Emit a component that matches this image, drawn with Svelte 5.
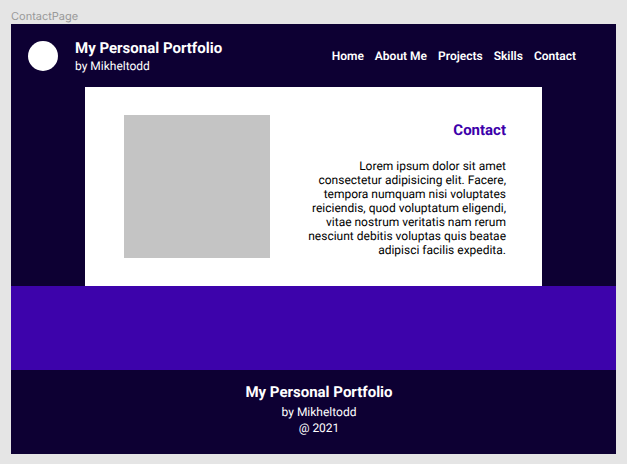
<script>
  const links = ['Home', 'About Me', 'Projects', 'Skills', 'Contact'];
</script>

<div class="board">
  <p class="label">ContactPage</p>
  <div class="page">
    <header>
      <span class="avatar"></span>
      <div class="brand">
        <h1>My Personal Portfolio</h1>
        <p>by Mikheltodd</p>
      </div>
      <nav>
        {#each links as link}
          <a href="#{link.toLowerCase().replace(' ', '-')}">{link}</a>
        {/each}
      </nav>
    </header>

    <main>
      <div class="photo"></div>
      <section>
        <h2>Contact</h2>
        <p>
          Lorem ipsum dolor sit amet consectetur adipisicing elit. Facere, tempora numquam nisi
          voluptates reiciendis, quod voluptatum eligendi, vitae nostrum veritatis nam rerum
          nesciunt debitis voluptas quis beatae adipisci facilis expedita.
        </p>
      </section>
    </main>

    <div class="band"></div>

    <footer>
      <h2>My Personal Portfolio</h2>
      <p>by Mikheltodd</p>
      <p>@ 2021</p>
    </footer>
  </div>
</div>

<style>
  :global(body) {
    background: #e5e5e5;
  }

  h1,
  h2,
  p {
    margin: 0;
  }

  h1,
  h2 {
    font-size: 15px;
    line-height: 18px;
    font-weight: 700;
  }

  .board {
    padding: 8px 11px 10px;
    font-family: Roboto, 'Liberation Sans', sans-serif;
    font-size: 12px;
    line-height: 16px;
    text-rendering: geometricPrecision;
  }

  .label {
    font-family: Inter, sans-serif;
    font-size: 11px;
    color: #999;
  }

  .page {
    background: #0d0033;
    color: #fff;
  }

  header {
    display: flex;
    align-items: center;
    height: 63px;
    box-sizing: border-box;
    padding: 0 40px 0 17px;
  }

  .avatar {
    width: 30px;
    height: 30px;
    border-radius: 50%;
    background: #fff;
  }

  .brand {
    margin-left: 17px;
    padding-top: 2px;
  }

  .brand p {
    line-height: 18px;
  }

  nav {
    display: flex;
    gap: 11px;
    margin-left: auto;
  }

  a {
    color: inherit;
    font-weight: 600;
    text-decoration: none;
  }

  main {
    display: flex;
    justify-content: space-between;
    margin: 0 74px;
    padding: 28px 36px 28px 39px;
    background: #fff;
  }

  .photo {
    width: 146px;
    height: 143px;
    background: #c4c4c4;
  }

  section {
    width: 200px;
    padding-top: 6px;
    text-align: right;
  }

  section h2 {
    margin-bottom: 20px;
    color: #3c00aa;
  }

  section p {
    line-height: 14px;
    color: #000;
  }

  .band {
    height: 84px;
    background: #3d03ab;
  }

  footer {
    padding: 13px 0 18px 11px;
    text-align: center;
  }

  footer h2 {
    margin-bottom: 3px;
  }
</style>
